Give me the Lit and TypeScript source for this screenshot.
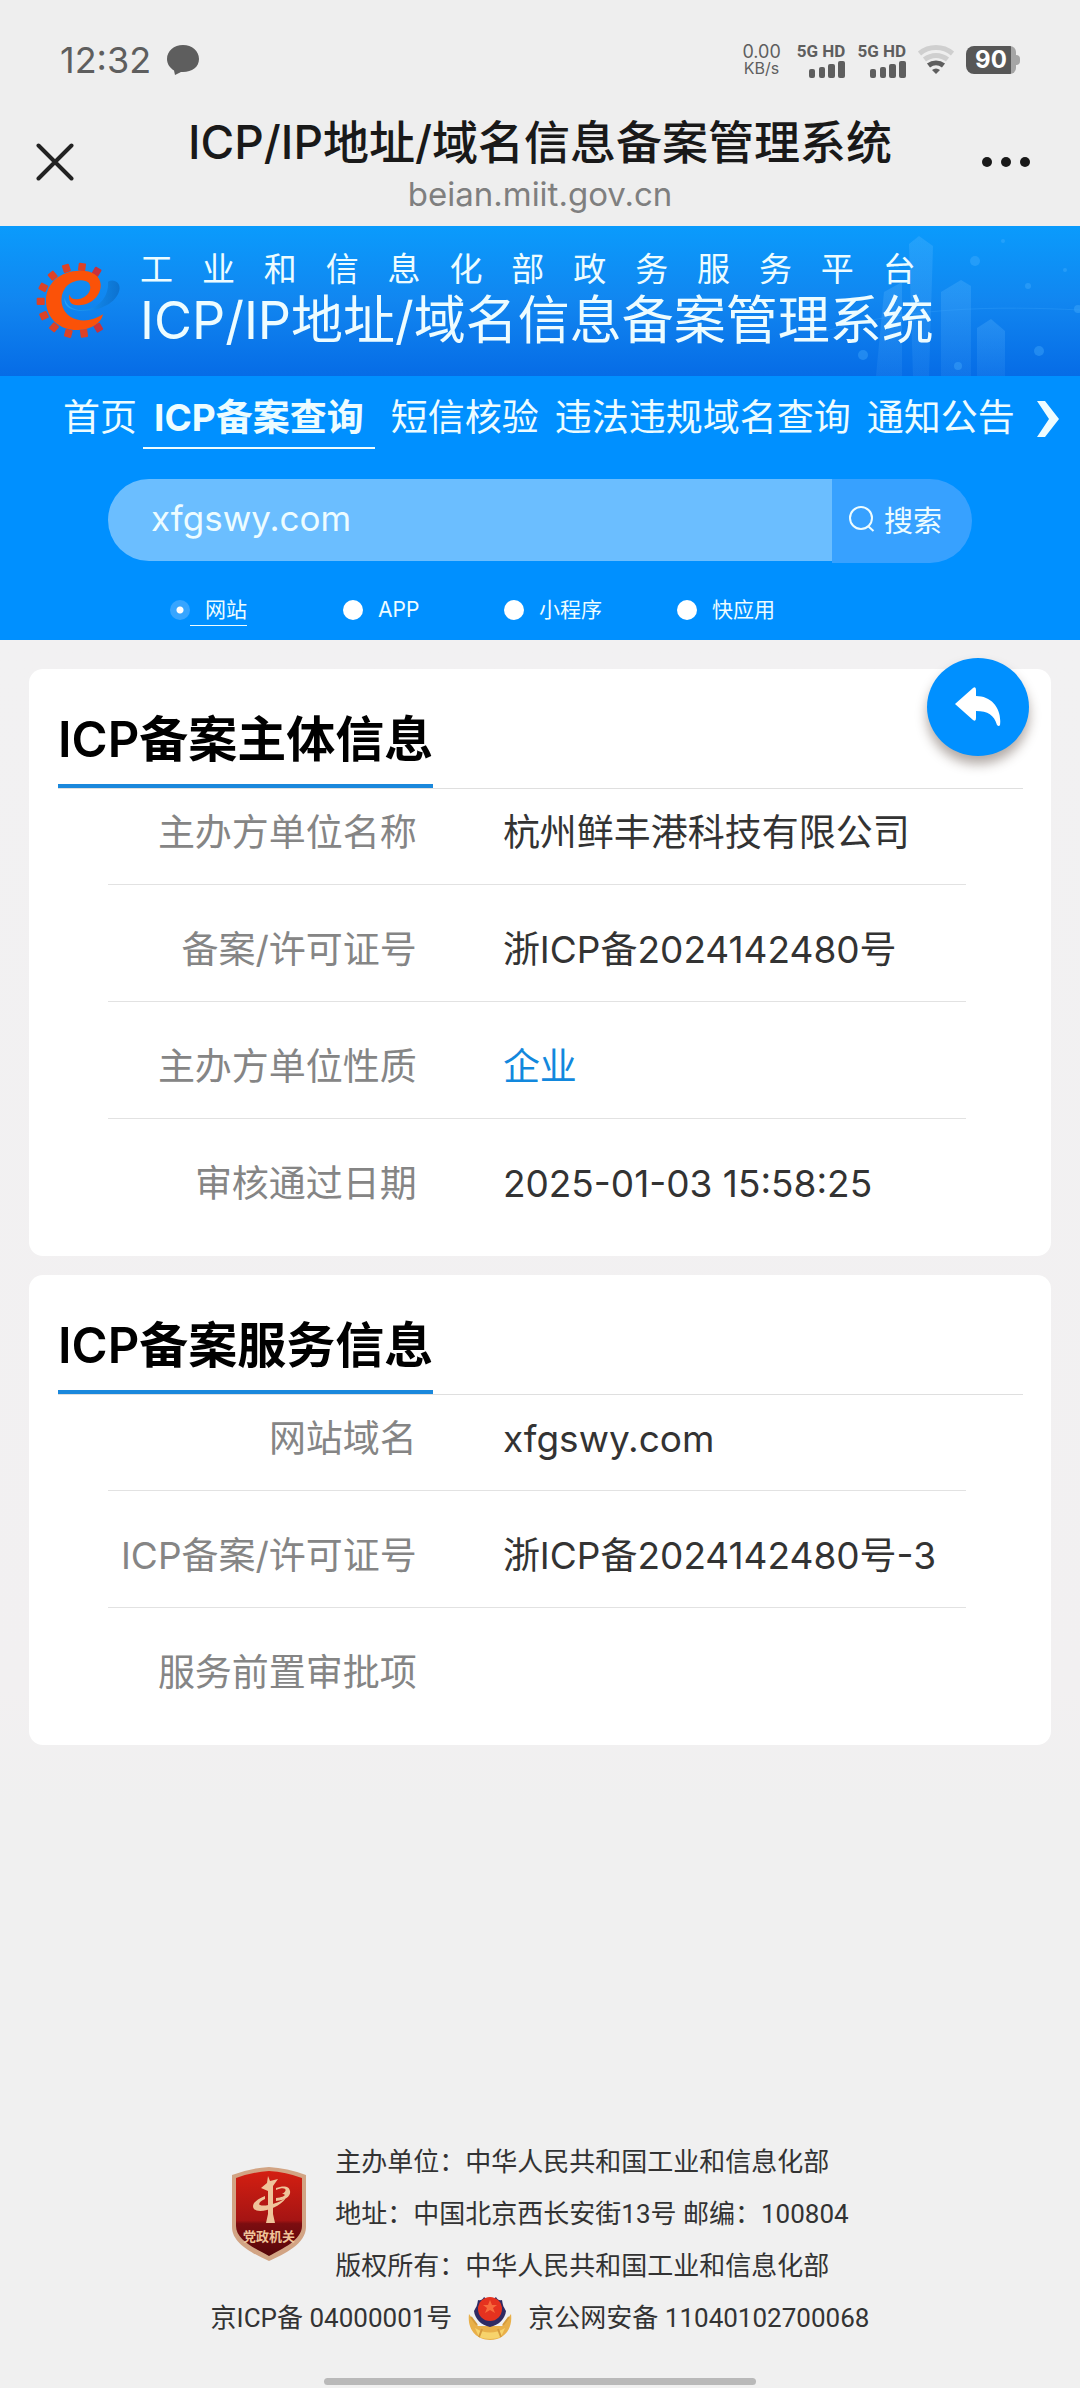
import { LitElement, html, css, svg } from "lit";
import { customElement, property, state } from "lit/decorators.js";

interface Row {
  label: string;
  value: string;
  link?: boolean;
}

@customElement("status-bar")
class StatusBar extends LitElement {
  static styles = css`
    :host {
      display: flex;
      justify-content: space-between;
      align-items: center;
      box-sizing: border-box;
      height: 120px;
      padding: 0 60px;
      color: #5e5e5e;
    }
    .group {
      display: flex;
      align-items: center;
    }
    .time {
      font-size: 36px;
      line-height: 40px;
      margin-right: 16px;
    }
    .speed {
      display: flex;
      flex-direction: column;
      align-items: center;
      margin-right: 16px;
      font-size: 18px;
      line-height: 16px;
    }
    .unit {
      font-size: 16px;
    }
    .sim {
      display: flex;
      flex-direction: column;
      align-items: flex-end;
      margin-right: 12px;
      gap: 2px;
      font-family: "Roboto", "Liberation Sans", sans-serif;
      font-weight: 700;
      font-size: 17px;
      line-height: 16px;
    }
    .battery {
      display: flex;
      align-items: center;
      margin-left: 12px;
    }
    .level {
      width: 50px;
      border-radius: 8px 6px 6px 8px;
      background: linear-gradient(90deg, #575757 90%, #a5a5a5 90%);
      color: #fff;
      font-weight: 700;
      font-size: 24px;
      line-height: 28px;
      text-align: center;
    }
    .cap {
      width: 4px;
      height: 10px;
      border-radius: 0 4px 4px 0;
      background: #a5a5a5;
    }
    svg {
      display: block;
    }
  `;

  private signal() {
    return html`<div class="sim">
      <span>5G HD</span>
      <svg width="36" height="17" viewBox="0 0 36 17" fill="#5e5e5e">
        <rect x="0" y="8" width="6" height="9" rx="2" />
        <rect x="10" y="6" width="6" height="11" rx="2" />
        <rect x="19" y="3" width="7" height="14" rx="2" />
        <rect x="29" y="0" width="7" height="17" rx="2" />
      </svg>
    </div>`;
  }

  render() {
    return html`
      <div class="group">
        <span class="time">12:32</span>
        <svg width="32" height="30" viewBox="0 0 32 30" fill="#5e5e5e">
          <path d="M16 0C7 0 0 6 0 14c0 5 3 9 7 11.500l1 4.500 6-3h2c9 0 16-5 16-13S25 0 16 0z" />
        </svg>
      </div>
      <div class="group">
        <div class="speed"><span>0.00</span><span class="unit">KB/s</span></div>
        ${this.signal()} ${this.signal()}
        <svg width="36" height="30" viewBox="0 0 36 30" fill="none" stroke-width="5">
          <path d="M1.500 8.500C11 0.500 25 0.500 34.500 8.500" stroke="#cfcfcf" />
          <path d="M6.500 14.500c7-5.500 16-5.500 23 0" stroke="#cfcfcf" />
          <path d="M10.500 20.500c4.500-3.500 10.500-3.500 15 0" stroke="#5e5e5e" />
          <path d="M18 29l-4-4c2.500-2 5.500-2 8 0z" fill="#5e5e5e" />
        </svg>
        <div class="battery"><span class="level">90</span><span class="cap"></span></div>
      </div>
    `;
  }
}

@customElement("title-bar")
class TitleBar extends LitElement {
  static styles = css`
    :host {
      display: grid;
      grid-template-columns: 1fr auto 1fr;
      align-items: start;
      box-sizing: border-box;
      height: 106px;
      padding: 0 50px 0 36px;
    }
    button {
      display: block;
      padding: 0;
      border: 0;
      background: none;
    }
    .close {
      justify-self: start;
      margin-top: 23px;
    }
    .more {
      justify-self: end;
      margin-top: 37px;
    }
    .center {
      padding-left: 14px;
      text-align: center;
    }
    .title {
      margin: 0;
      font-size: 46px;
      font-weight: 500;
      line-height: 44px;
      color: #191919;
    }
    .url {
      font-size: 33px;
      line-height: 60px;
      color: #7f7f7f;
    }
    svg {
      display: block;
    }
  `;

  render() {
    return html`
      <button class="close" aria-label="关闭">
        <svg width="38" height="38" viewBox="0 0 38 38" stroke="#222" stroke-width="4" stroke-linecap="round">
          <path d="M2.500 2.500l33 33M35.500 2.500l-33 33" />
        </svg>
      </button>
      <div class="center">
        <p class="title">ICP/IP地址/域名信息备案管理系统</p>
        <div class="url">beian.miit.gov.cn</div>
      </div>
      <button class="more" aria-label="更多">
        <svg width="48" height="10" viewBox="0 0 48 10" fill="#191919">
          <circle cx="5" cy="5" r="5" />
          <circle cx="24" cy="5" r="5" />
          <circle cx="43" cy="5" r="5" />
        </svg>
      </button>
    `;
  }
}

@customElement("site-banner")
class SiteBanner extends LitElement {
  static styles = css`
    :host {
      display: flex;
      align-items: flex-start;
      position: relative;
      box-sizing: border-box;
      height: 150px;
      padding: 24px 30px 0;
      overflow: hidden;
      background: linear-gradient(180deg, #0a9bfc 0%, #1186f0 50%, #066ce6 100%);
      color: #edfcff;
    }
    .skyline {
      position: absolute;
      right: 0;
      top: 0;
    }
    .logo {
      display: block;
      flex: none;
      margin-top: 5px;
    }
    .names {
      position: relative;
      padding-left: 10px;
    }
    .platform {
      display: flex;
      justify-content: space-between;
      padding-right: 18px;
      font-size: 33px;
      line-height: 38px;
    }
    .system {
      margin: 0;
      font-size: 52px;
      font-weight: 400;
      line-height: 66px;
    }
  `;

  render() {
    const teeth = [
      [200, 50, 30], [156, 36, 8], [109, 40, -18], [68, 62, -40], [40, 97, -62], [32, 139, -90],
      [42, 182, 65], [72, 217, 40], [115, 235, 15], [162, 235, -8], [205, 218, -30],
    ];
    return html`
      <svg class="skyline" width="420" height="150" viewBox="0 0 420 150" aria-hidden="true">
        <defs>
          <linearGradient id="tower" x1="0" y1="0" x2="0" y2="1">
            <stop offset="0" stop-color="#6cc0ff" stop-opacity="0.24" />
            <stop offset="1" stop-color="#6cc0ff" stop-opacity="0.1" />
          </linearGradient>
        </defs>
        <g fill="url(#tower)">
          <path d="M249 18l10-8 14 10-4 130h-16z" />
          <path d="M224 66l18-10v94h-26z" />
          <path d="M281 66l20-12 10 6v90h-30z" />
          <path d="M317 102l14-9 14 12v45h-28z" />
        </g>
        <g fill="#4fb4ff" opacity="0.35">
          <circle cx="315" cy="35" r="5" />
          <circle cx="203" cy="129" r="5" />
          <circle cx="379" cy="125" r="5" />
          <circle cx="368" cy="60" r="3" />
          <circle cx="343" cy="15" r="2" />
          <circle cx="405" cy="44" r="2" />
          <circle cx="418" cy="83" r="4" />
          <circle cx="298" cy="140" r="4" />
        </g>
        <path d="M150 110c90-30 190-30 270-26" fill="none" stroke="#3ba4fb" opacity="0.3" />
      </svg>
      <svg class="logo" width="100" height="90" viewBox="0 0 300 270" role="img" aria-label="工业和信息化部">
        <defs>
          <linearGradient id="swoosh" x1="0" x2="1">
            <stop offset="0" stop-color="#36b4f5" />
            <stop offset="0.55" stop-color="#1286e2" />
            <stop offset="1" stop-color="#0a62b8" />
          </linearGradient>
        </defs>
        <path
          d="M104 128c6 40 60 48 98 22 26-18 34-48 32-70 14-10 40 0 34 26-8 38-60 62-104 62-40 0-64-12-60-40z"
          fill="url(#swoosh)" opacity="0.6"
        />
        ${teeth.map(
          ([x, y, a], i) => svg`<rect x=${x - 11} y=${y - 12} width="22" height="24" rx="3"
            transform="rotate(${a} ${x} ${y})" fill=${i === 0 || i === 10 ? "#c8323c" : "#dc4226"} />`
        )}
        <path
          d="M118 118C114 140 124 152 146 151C184 150 214 122 212 88C210 60 184 46 150 47C90 47 48 85 48 137C48 190 90 227 145 225C186 223 214 204 219 178C190 198 150 203 122 186C92 166 86 126 106 98C124 76 160 68 177 84C190 106 168 131 142 133C128 134 120 128 118 118Z"
          fill="#fb5208"
        />
      </svg>
      <div class="names">
        <div class="platform">${[..."工业和信息化部政务服务平台"].map((c) => html`<span>${c}</span>`)}</div>
        <h1 class="system">ICP/IP地址/域名信息备案管理系统</h1>
      </div>
    `;
  }
}

@customElement("search-panel")
class SearchPanel extends LitElement {
  @state() private kind = "网站";

  static styles = css`
    :host {
      display: flex;
      flex-direction: column;
      box-sizing: border-box;
      height: 264px;
      background: #0090ff;
      color: #edfcff;
    }
    nav {
      display: flex;
      align-items: center;
      gap: 6px;
      padding: 13px 0 0 53px;
      font-size: 37px;
      line-height: 58px;
      white-space: nowrap;
    }
    .item {
      padding-left: 10px;
      border-bottom: 2px solid transparent;
      color: inherit;
      text-decoration: none;
    }
    .item.active {
      padding: 0 11px;
      border-color: #edfcff;
      font-weight: 700;
    }
    .next {
      margin-left: 16px;
      padding: 0;
      border: 0;
      background: none;
    }
    svg {
      display: block;
    }
    .search {
      display: flex;
      align-items: flex-start;
      margin: 30px 108px 0;
    }
    .query {
      flex: 1;
      min-width: 0;
      box-sizing: border-box;
      height: 82px;
      padding: 0 43px 4px;
      border: 0;
      border-radius: 42px 0 0 42px;
      outline: none;
      background: #6bbeff;
      color: #edfcff;
      font: inherit;
      font-size: 35px;
    }
    .go {
      display: flex;
      align-items: center;
      gap: 9px;
      height: 84px;
      padding: 0 30px 4px 17px;
      border: 0;
      border-radius: 0 42px 42px 0;
      background: #37a1ff;
      color: #edfcff;
      font: inherit;
      font-size: 29px;
    }
    .kinds {
      display: grid;
      grid-template-columns: 173px 161px 173px 173px;
      margin: 32px 0 0 170px;
    }
    .kind {
      display: flex;
      align-items: center;
      font-size: 21px;
      line-height: 30px;
    }
    .kind input {
      appearance: none;
      width: 20px;
      height: 20px;
      margin: 0;
      border-radius: 50%;
      background: #fff;
    }
    .kind input:checked {
      background: radial-gradient(circle, #fff 3px, #37a5ff 4px);
    }
    .kind span {
      padding-left: 15px;
    }
    .kind input:checked + span {
      box-shadow: 0 1px #edfcff;
    }
  `;

  render() {
    const links = ["首页", "ICP备案查询", "短信核验", "违法违规域名查询", "通知公告"];
    return html`
      <nav>
        ${links.map((t, i) => html`<a class="item ${i === 1 ? "active" : ""}" href="#">${t}</a>`)}
        <button class="next" aria-label="更多栏目">
          <svg width="22" height="36" viewBox="0 0 22 36" fill="#edfcff">
            <path d="M0 0h8l14 18L8 36H0l12-18z" />
          </svg>
        </button>
      </nav>
      <form class="search" @submit=${(e: Event) => e.preventDefault()}>
        <input class="query" type="text" aria-label="查询内容" .value=${"xfgswy.com"} />
        <button class="go">
          <svg width="26" height="26" viewBox="0 0 26 26" fill="none" stroke="#edfcff" stroke-width="2">
            <circle cx="12" cy="12" r="11" />
            <path d="M19.500 20.500l5 4.500" />
          </svg>
          <span>搜索</span>
        </button>
      </form>
      <div class="kinds">
        ${["网站", "APP", "小程序", "快应用"].map(
          (k) => html`<label class="kind">
            <input type="radio" name="kind" .checked=${k === this.kind} @change=${() => (this.kind = k)} />
            <span>${k}</span>
          </label>`
        )}
      </div>
    `;
  }
}

@customElement("info-card")
class InfoCard extends LitElement {
  @property() heading = "";
  @property({ attribute: false }) rows: Row[] = [];

  static styles = css`
    :host {
      display: block;
      padding: 0 28px 21px 29px;
      border-radius: 14px;
      background: #fff;
    }
    .head {
      border-bottom: 1px solid #dfdfdf;
    }
    h2 {
      display: inline-block;
      vertical-align: top;
      margin: 0;
      padding-top: 27px;
      border-bottom: 4px solid #1a88dc;
      font-size: 49px;
      font-weight: 700;
      line-height: 88px;
      color: #000;
    }
    .latin {
      font-weight: 600;
    }
    .body {
      padding: 0 57px 0 50px;
    }
    table {
      width: 100%;
      border-collapse: collapse;
      font-size: 37px;
      line-height: 52px;
    }
    th,
    td {
      padding: 39px 0 25px;
    }
    tr:first-child > * {
      padding-top: 18px;
    }
    tr:not(:last-child) {
      border-bottom: 1px solid #e2e2e2;
    }
    th {
      width: 36%;
      font-weight: 400;
      text-align: right;
      white-space: nowrap;
      color: #858585;
    }
    td {
      padding-left: 86px;
      color: #333;
    }
    a {
      color: #1288dd;
      text-decoration: none;
    }
  `;

  render() {
    return html`
      <div class="head"><h2><span class="latin">ICP</span>${this.heading}</h2></div>
      <div class="body">
        <table>
          ${this.rows.map(
            (r) => html`<tr>
              <th scope="row">${r.label}</th>
              <td>${r.link ? html`<a href="#">${r.value}</a>` : r.value}</td>
            </tr>`
          )}
        </table>
      </div>
    `;
  }
}

@customElement("site-footer")
class SiteFooter extends LitElement {
  static styles = css`
    :host {
      display: flex;
      flex-direction: column;
      align-items: center;
      font-family: "Roboto", "Noto Sans CJK SC", sans-serif;
      font-size: 26px;
      line-height: 52px;
      color: #333;
    }
    .top,
    .records {
      display: flex;
      align-items: center;
    }
    .top {
      gap: 28px;
    }
    .records {
      gap: 16px;
    }
    p {
      margin: 0;
    }
    a {
      color: inherit;
      text-decoration: none;
    }
    svg {
      display: block;
    }
    .motto {
      font-family: "Noto Sans CJK SC", sans-serif;
      font-size: 13px;
      font-weight: 700;
    }
  `;

  render() {
    return html`
      <div class="top">
        <svg width="76" height="94" viewBox="0 0 76 94" role="img" aria-label="党政机关">
          <defs>
            <linearGradient id="shield" x1="0" y1="0" x2="0" y2="1">
              <stop offset="0" stop-color="#d41f12" />
              <stop offset="0.58" stop-color="#a51413" />
              <stop offset="0.62" stop-color="#7c0d10" />
              <stop offset="1" stop-color="#560609" />
            </linearGradient>
          </defs>
          <path d="M38 0Q56 1 75 8v52c0 17-22 27-37 34C23 87 1 77 1 60V8Q20 1 38 0z" fill="#d2a484" />
          <path d="M38 4q17 1 33 7v48c0 14-20 23-33 30C25 82 5 73 5 59V11Q21 5 38 4z" fill="url(#shield)" />
          <g fill="#efc49a">
            <path d="M37 9l2 5 8-2-5 7v28l2 9h-9l2-9V24l-7-3 6-5z" />
            <path
              d="M45 23c9-4 13 0 6 4 5 0 3 3-6 4v3c10-1 15-5 14-10-1-6-8-5-14-3zM34 29c-10 4-14 9-11 13 5 5 24 0 32-11-9 6-22 9-26 7-2-1 0-4 5-6z"
            />
          </g>
          <text class="motto" x="38" y="74" text-anchor="middle" fill="#efc49a">党政机关</text>
        </svg>
        <div>
          <p>主办单位：中华人民共和国工业和信息化部</p>
          <p>地址：中国北京西长安街13号 邮编：100804</p>
          <p>版权所有：中华人民共和国工业和信息化部</p>
        </div>
      </div>
      <div class="records">
        <a href="#">京ICP备 04000001号</a>
        <svg width="44" height="46" viewBox="0 0 44 46" aria-hidden="true">
          <path d="M1 19C-1 34 8 45 22 45s23-11 21-26l-9 12H10z" fill="#e9b04a" />
          <path d="M7 33q15 9 30 0l-4 9q-11 4-22 0z" fill="#f7d36c" />
          <path d="M3 22l6 8M41 22l-6 8M14 34l-3 8M30 34l3 8" stroke="#d59a3c" stroke-width="2" />
          <path d="M6 16c2-4 3-4 4-11 3 1 5-1 6-3 3 3 9 3 12 0 1 2 3 4 6 3 1 7 2 7 4 11-1 8-7 14-16 16C13 30 7 24 6 16z" fill="#2f2a63" />
          <circle cx="22" cy="14" r="12" fill="#e5321f" />
          <path d="M22 5l2 5h5l-4 3 2 5-5-3-5 3 2-5-4-3h5z" fill="#f76b3c" />
        </svg>
        <a href="#">京公网安备 11040102700068</a>
      </div>
    `;
  }
}

@customElement("app-root")
class AppRoot extends LitElement {
  static styles = css`
    :host {
      display: flex;
      flex-direction: column;
      box-sizing: border-box;
      min-height: 100vh;
      background: #f0f0f0;
      font-family: "Inter", "Noto Sans CJK SC", sans-serif;
    }
    header {
      background: #eeeeee;
    }
    main {
      position: relative;
      display: flex;
      flex-direction: column;
      gap: 19px;
      padding: 29px 29px 60px;
      background: linear-gradient(180deg, #f2f1f2 0%, #f2f0f1 90%, #f0f0f0 100%);
    }
    .back {
      position: absolute;
      top: 18px;
      right: 51px;
      display: flex;
      align-items: center;
      justify-content: center;
      width: 102px;
      height: 98px;
      padding: 0;
      border: 0;
      border-radius: 50%;
      background: #0090ff;
      box-shadow: 0 8px 12px rgba(60, 40, 30, 0.4);
    }
    site-footer {
      margin-top: auto;
      padding-top: 40px;
    }
    .handle {
      width: 40%;
      height: 7px;
      margin: 34px auto 3px;
      border-radius: 4px;
      background: #b9b9b9;
    }
  `;

  private subject: Row[] = [
    { label: "主办方单位名称", value: "杭州鲜丰港科技有限公司" },
    { label: "备案/许可证号", value: "浙ICP备2024142480号" },
    { label: "主办方单位性质", value: "企业", link: true },
    { label: "审核通过日期", value: "2025-01-03 15:58:25" },
  ];

  private service: Row[] = [
    { label: "网站域名", value: "xfgswy.com" },
    { label: "ICP备案/许可证号", value: "浙ICP备2024142480号-3" },
    { label: "服务前置审批项", value: "" },
  ];

  render() {
    return html`
      <header>
        <status-bar></status-bar>
        <title-bar></title-bar>
      </header>
      <site-banner></site-banner>
      <search-panel></search-panel>
      <main>
        <info-card heading="备案主体信息" .rows=${this.subject}></info-card>
        <info-card heading="备案服务信息" .rows=${this.service}></info-card>
        <button class="back" aria-label="返回">
          <svg width="46" height="40" viewBox="0 0 46 40" fill="#fff">
            <path d="M0 17L18 1q3-2 3 2v6c16 0 26 13 24 29q-1 2-3 0C39 28 33 24 21 24v7q0 4-3 2z" />
          </svg>
        </button>
      </main>
      <site-footer></site-footer>
      <div class="handle"></div>
    `;
  }
}
